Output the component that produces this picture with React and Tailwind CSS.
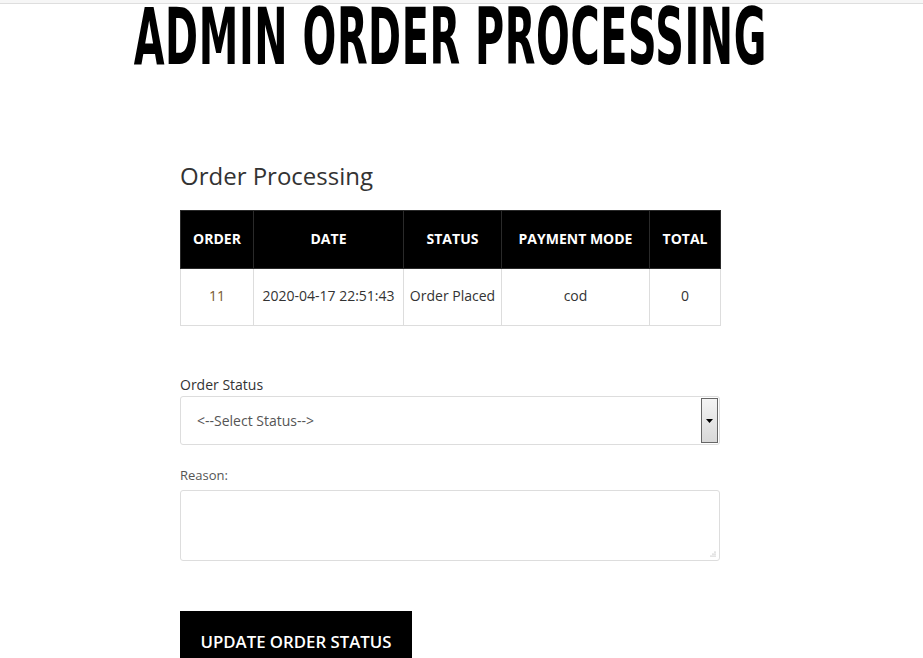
export default function App() {
  const cols = [
    { label: "ORDER", w: "w-[73px]" },
    { label: "DATE", w: "w-[150px]" },
    { label: "STATUS", w: "w-[98px]" },
    { label: "PAYMENT MODE", w: "w-[148px]" },
    { label: "TOTAL", w: "w-[71px]" },
  ];
  const row = ["11", "2020-04-17 22:51:43", "Order Placed", "cod", "0"];

  return (
    <div className="min-h-[658px] bg-white font-['Open_Sans',sans-serif] text-[#333]">
      <div className="h-[4px] bg-[#f6f6f6] border-b border-[#dedede]" />
      <div className="w-[540px] ml-[180px]">
        <div className="flex justify-center h-[66px] overflow-visible">
          <h1 className="inline-block whitespace-nowrap scale-x-[0.56] origin-center font-['DejaVu_Sans_Condensed','DejaVu_Sans',sans-serif] font-bold text-[79px] leading-[66px] tracking-[1px] text-black">
            ADMIN ORDER PROCESSING
          </h1>
        </div>

        <h2 className="mt-[91px] text-[24px] leading-[30px] text-[#333]">Order Processing</h2>

        <table className="mt-[19px] w-[540px] border-collapse text-[14px] table-fixed">
          <thead>
            <tr className="h-[58px] bg-black text-white">
              {cols.map((c) => (
                <th key={c.label} className={`${c.w} border border-[#2a2a2a] font-bold text-[14px] text-center pb-[2px]`}>
                  {c.label}
                </th>
              ))}
            </tr>
          </thead>
          <tbody>
            <tr className="h-[57px]">
              {row.map((v, i) => (
                <td
                  key={i}
                  className={`border border-[#dddddd] text-center pb-[3px] ${i === 0 ? "text-[#7a5a2e]" : "text-[#333]"}`}
                >
                  {v}
                </td>
              ))}
            </tr>
          </tbody>
        </table>

        <div className="mt-[49px] text-[14px] leading-[20px]">Order Status</div>
        <div className="mt-[1px] h-[49px] flex border border-[#dddddd] rounded-[3px]">
          <div className="flex-1 flex items-center pl-[16px] text-[14px] text-[#555]">&lt;--Select Status--&gt;</div>
          <div className="w-[17px] m-[1px] border border-[#666] bg-gradient-to-b from-[#f4f4f4] to-[#d8d8d8] flex items-center justify-center">
            <svg width="7" height="4" viewBox="0 0 7 4">
              <path d="M0 0h7L3.5 4z" fill="#000" />
            </svg>
          </div>
        </div>

        <div className="mt-[21px] text-[13px] leading-[18px] text-[#555]">Reason:</div>
        <div className="relative mt-[6px] h-[71px] border border-[#dddddd] rounded-[3px]">
          <svg className="absolute right-[3px] bottom-[3px]" width="6" height="6" viewBox="0 0 6 6">
            <circle cx="5" cy="1" r="0.6" fill="#999" />
            <circle cx="3" cy="3" r="0.6" fill="#999" />
            <circle cx="5" cy="3" r="0.6" fill="#999" />
            <circle cx="1" cy="5" r="0.6" fill="#999" />
            <circle cx="3" cy="5" r="0.6" fill="#999" />
            <circle cx="5" cy="5" r="0.6" fill="#999" />
          </svg>
        </div>

        <button className="mt-[50px] w-[232px] h-[62px] bg-black text-white text-[16.8px] font-semibold pt-0">
          UPDATE ORDER STATUS
        </button>
      </div>
    </div>
  );
}
